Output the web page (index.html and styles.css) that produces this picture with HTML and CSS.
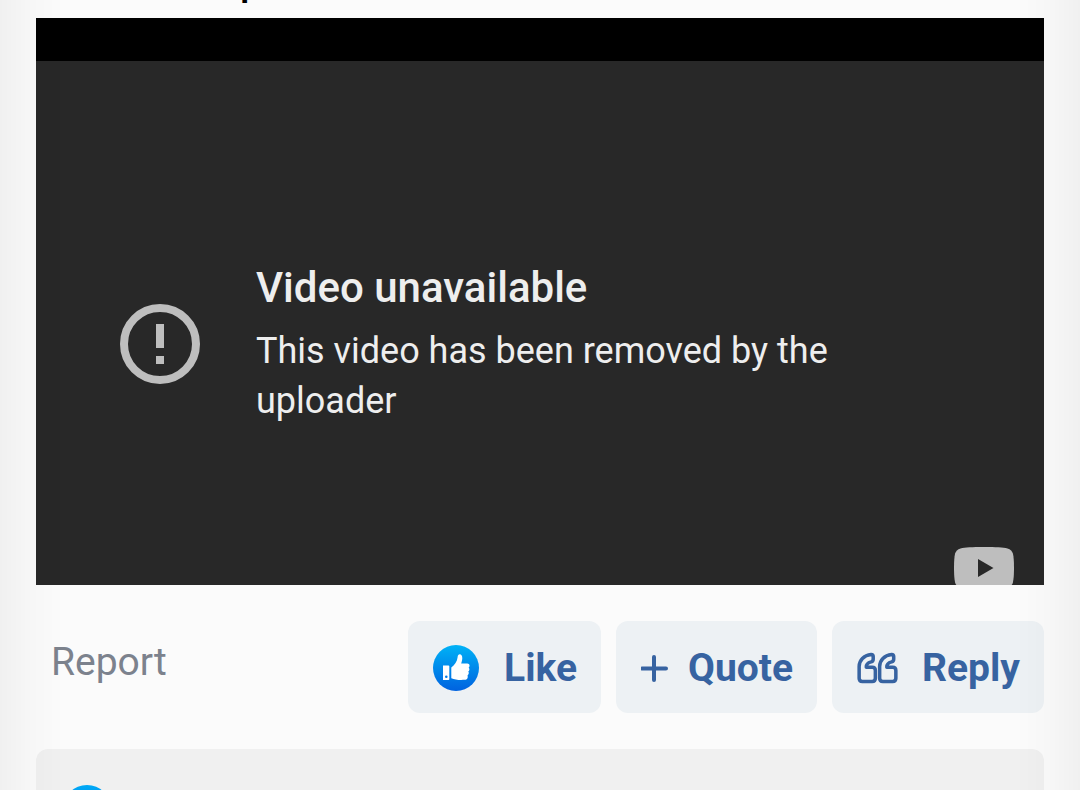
FILE: index.html
```html
<!DOCTYPE html>
<html lang="en">
<head>
    <meta charset="UTF-8">
    <meta name="viewport" content="width=device-width, initial-scale=1.0">
    <title>Forum post</title>
    <link rel="stylesheet" href="styles.css">
</head>
<body>

<article class="post">
    <div class="post-text"><span>p</span></div>

    <div class="video">
        <div class="player">
            <svg class="error-icon" viewBox="0 0 80 80">
                <circle cx="40" cy="40" r="36" fill="none" stroke="#bebebe" stroke-width="8"/>
                <path d="M36 20h8v24h-8zM36 52h8v8h-8z" fill="#bebebe"/>
            </svg>
            <div class="message">
                <h2>Video unavailable</h2>
                <p>This video has been removed by the uploader</p>
            </div>
            <a class="youtube" href="#" aria-label="Watch on YouTube">
                <svg viewBox="0 0 60 42">
                    <path d="M30 0C42 0 49 .4 53.500 1.400C56.500 2.200 58.200 4 58.900 6.600C59.700 10 60 15 60 21S59.700 32 58.900 35.400C58.200 38 56.500 39.800 53.500 40.600C49 41.600 42 42 30 42S11 41.600 6.500 40.600C3.500 39.800 1.800 38 1.100 35.400C.3 32 0 27 0 21S.3 10 1.100 6.600C1.800 4 3.500 2.200 6.500 1.400C11 .4 18 0 30 0Z" fill="#bebebe"/>
                    <path d="M24 12v18l15.500-9z" fill="#282828"/>
                </svg>
            </a>
        </div>
    </div>

    <footer class="actions">
        <a class="report" href="#">Report</a>
        <div class="buttons">
            <button type="button">
                <svg class="icon-like" viewBox="0 0 46 46">
                    <defs>
                        <linearGradient id="blue" x1="0" y1="0" x2="0" y2="1">
                            <stop offset="0" stop-color="#00b2f6"/>
                            <stop offset="1" stop-color="#0062df"/>
                        </linearGradient>
                    </defs>
                    <circle cx="23" cy="23" r="23" fill="url(#blue)"/>
                    <path d="M10 20.500h5.500q.8 0 .8.800v12.900q0 .8-.8.800H10zM13.300 30.500a1.300 1.300 0 1 0 0 2.600 1.300 1.300 0 0 0 0-2.600z" fill="#fff" fill-rule="evenodd"/>
                    <path d="M18.300 22.500C21.500 20 24.300 16.500 24.600 12.200C24.700 8 29.500 8.300 29.300 13.300C29.200 15.600 28.500 17.300 28.200 18.500H34.300C36.900 18.500 37.200 21.600 35.600 22.600C36.800 23.700 36.600 25.700 35.300 26.600C36.200 27.900 35.800 29.600 34.500 30.500C35.300 32.600 34.200 34.800 31.800 34.800C26.500 35.200 22 34.800 18.300 33.200Z" fill="#fff"/>
                </svg>
                <span>Like</span>
            </button>
            <button type="button">
                <svg class="icon-plus" viewBox="0 0 27 27">
                    <path d="M13 2v23M1 13.500h24" stroke="#3763a1" stroke-width="4" stroke-linecap="round"/>
                </svg>
                <span>Quote</span>
            </button>
            <button type="button">
                <svg class="icon-quote" viewBox="0 0 42 32" fill="none" stroke="#3763a1" stroke-width="3.600" stroke-linejoin="round">
                    <path id="mark" d="M14.500 2.200C7 3 2.200 8 2.200 14.500V26.500Q2.200 29.800 5.500 29.800H15.500Q18.800 29.800 18.800 26.500V18.500Q18.800 15.200 15.500 15.200H9.500C9.300 11.800 11 10.600 14.500 9.700Q16.600 9 16.600 7V4.300Q16.600 2.200 14.500 2.200Z"/>
                    <use href="#mark" x="21"/>
                </svg>
                <span>Reply</span>
            </button>
        </div>
    </footer>

    <div class="reactions">
        <span class="reaction"></span>
    </div>
</article>

</body>
</html>
```

FILE: styles.css
```css
body {
    margin: 0;
    font-family: Roboto, sans-serif;
    background: #fbfbfb;
    overflow: hidden;
}
/* soft shading along both sides of the page */
body::after {
    content: "";
    position: fixed;
    inset: 0;
    pointer-events: none;
    background:
        linear-gradient(to right, rgba(0, 0, 0, 0.045), rgba(0, 0, 0, 0.015) 32px, transparent 64px),
        linear-gradient(to left, rgba(0, 0, 0, 0.045), rgba(0, 0, 0, 0.015) 32px, transparent 64px);
}
.post {
    padding: 0 36px;
}
.post-text {
    display: flex;
    align-items: flex-end;
    height: 18px;
    padding-left: 204px;
    overflow: hidden;
    color: #000;
    font-size: 39px;
    font-weight: 500;
    line-height: 48px;
}
.post-text span {
    padding-bottom: 12px;
}
.video {
    display: flex;
    box-sizing: border-box;
    aspect-ratio: 16 / 9;
    padding-top: 43px;
    background: #000;
}
.player {
    position: relative;
    flex: 1;
    display: flex;
    align-items: center;
    gap: 56px;
    padding: 42px 84px 0;
    background: #282828;
    color: #eee;
    overflow: hidden;
}
.error-icon {
    flex: none;
    width: 80px;
    height: 80px;
}
.message {
    max-width: 620px;
}
.message h2 {
    margin: 0 0 12px;
    font-size: 42px;
    font-weight: 500;
    line-height: 52px;
}
.message p {
    margin: 0;
    font-size: 36px;
    line-height: 50px;
}
.youtube {
    position: absolute;
    right: 30px;
    bottom: -4px;
    width: 60px;
    height: 42px;
}
.youtube svg {
    display: block;
}
.actions {
    display: flex;
    justify-content: space-between;
    align-items: center;
    padding: 36px 0;
}
.report {
    padding: 0 0 10px 15px;
    color: #7c828d;
    font-size: 39px;
    line-height: 48px;
    text-decoration: none;
}
.buttons {
    display: flex;
    gap: 15px;
}
.buttons button {
    display: flex;
    align-items: center;
    gap: 20px;
    height: 92px;
    padding: 2px 24px 0 25px;
    border: 0;
    border-radius: 12px;
    background: #edf1f4;
    color: #3763a1;
    font-family: inherit;
    font-size: 39px;
    font-weight: 700;
    line-height: 48px;
    cursor: pointer;
}
.icon-like {
    width: 46px;
    height: 46px;
    margin-right: 5px;
}
.icon-plus {
    width: 27px;
    height: 27px;
}
.icon-quote {
    width: 41px;
    height: 32px;
    margin-right: 4px;
}
.reactions {
    height: 120px;
    padding: 36px 27px;
    border-radius: 12px;
    background: #f0f0f0;
}
.reaction {
    display: block;
    width: 48px;
    height: 48px;
    border-radius: 50%;
    background: linear-gradient(#00aaf6, #0062df);
}
```
